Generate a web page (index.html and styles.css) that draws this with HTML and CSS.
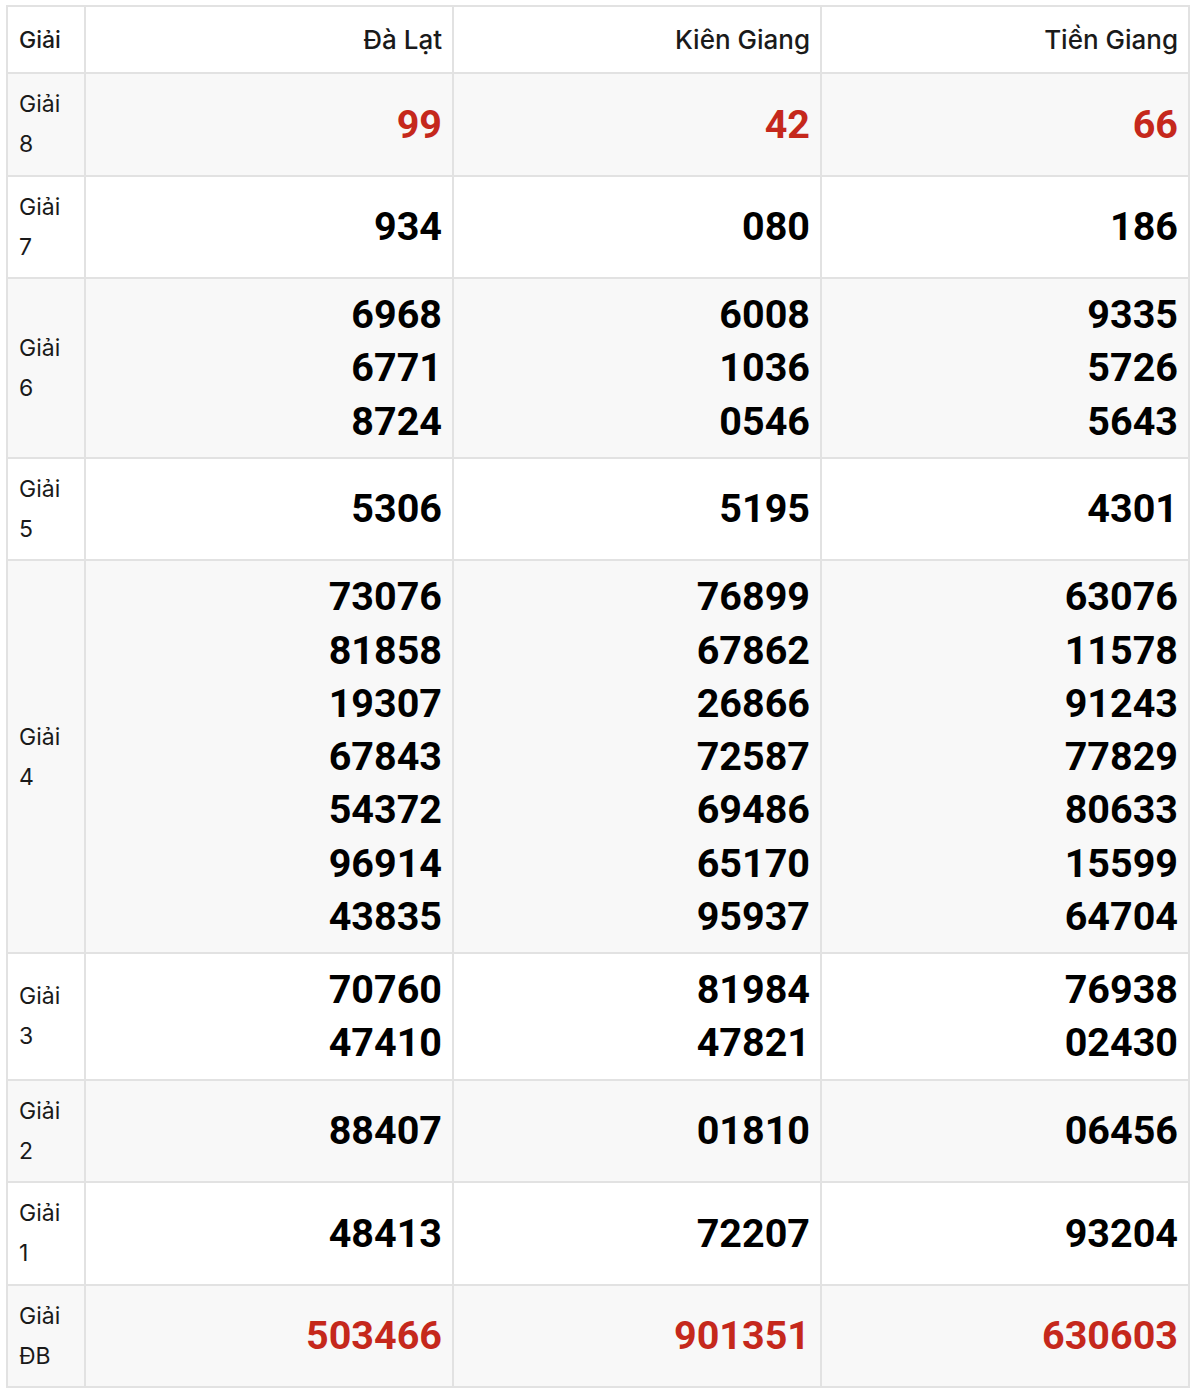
FILE: index.html
```html
<!DOCTYPE html>
<html lang="vi">
<head>
<meta charset="utf-8">
<title>Kết quả xổ số</title>
<link rel="stylesheet" href="styles.css">
</head>
<body>
<div class="wrap">
<table class="kq">
<colgroup><col class="c-label"><col class="c-prov"><col class="c-prov"><col class="c-prov"></colgroup>
<thead>
<tr><th class="lbl">Giải</th><th>Đà Lạt</th><th>Kiên Giang</th><th>Tiền Giang</th></tr>
</thead>
<tbody>
<tr class="alt"><td class="lbl">Giải<br>8</td><td class="num red">99</td><td class="num red">42</td><td class="num red">66</td></tr>
<tr><td class="lbl">Giải<br>7</td><td class="num">934</td><td class="num">080</td><td class="num">186</td></tr>
<tr class="alt"><td class="lbl">Giải<br>6</td><td class="num">6968<br>6771<br>8724</td><td class="num">6008<br>1036<br>0546</td><td class="num">9335<br>5726<br>5643</td></tr>
<tr><td class="lbl">Giải<br>5</td><td class="num">5306</td><td class="num">5195</td><td class="num">4301</td></tr>
<tr class="alt"><td class="lbl">Giải<br>4</td><td class="num">73076<br>81858<br>19307<br>67843<br>54372<br>96914<br>43835</td><td class="num">76899<br>67862<br>26866<br>72587<br>69486<br>65170<br>95937</td><td class="num">63076<br>11578<br>91243<br>77829<br>80633<br>15599<br>64704</td></tr>
<tr><td class="lbl">Giải<br>3</td><td class="num">70760<br>47410</td><td class="num">81984<br>47821</td><td class="num">76938<br>02430</td></tr>
<tr class="alt"><td class="lbl">Giải<br>2</td><td class="num">88407</td><td class="num">01810</td><td class="num">06456</td></tr>
<tr><td class="lbl">Giải<br>1</td><td class="num">48413</td><td class="num">72207</td><td class="num">93204</td></tr>
<tr class="alt"><td class="lbl">Giải<br>ĐB</td><td class="num red">503466</td><td class="num red">901351</td><td class="num red">630603</td></tr>
</tbody>
</table>
</div>
</body>
</html>
```

FILE: styles.css
```css
html, body {
  margin: 0;
  padding: 0;
  background: #ffffff;
}
.wrap {
  padding: 5px 0 0 6px;
}
.kq {
  border-collapse: collapse;
  table-layout: fixed;
  width: 1182px;
  font-family: Inter, "Liberation Sans", sans-serif;
  color: #1a1a1a;
}
.c-label { width: 78px; }
.c-prov { width: 368px; }
.kq th, .kq td {
  border: 2px solid #e2e2e2;
  vertical-align: middle;
}
.kq th {
  font-size: 26px;
  font-weight: 500;
  line-height: 40px;
  padding: 12.5px 10px 12.5px;
  text-align: right;
  background: #ffffff;
}
.kq th.lbl {
  text-align: left;
  font-size: 23px;
  padding-left: 11px;
}
.kq td.lbl {
  font-size: 23px;
  line-height: 40px;
  padding: 10.25px 8px 10.25px 11px;
  text-align: left;
}
.kq td.num {
  font-family: Roboto, "Liberation Sans", sans-serif;
  font-weight: 700;
  font-size: 39.5px;
  line-height: 53.25px;
  padding: 9px 10px;
  text-align: right;
  color: #000000;
}
.kq td.red { color: #c5281c; }
.kq tr.alt td { background: #f8f8f8; }
```
